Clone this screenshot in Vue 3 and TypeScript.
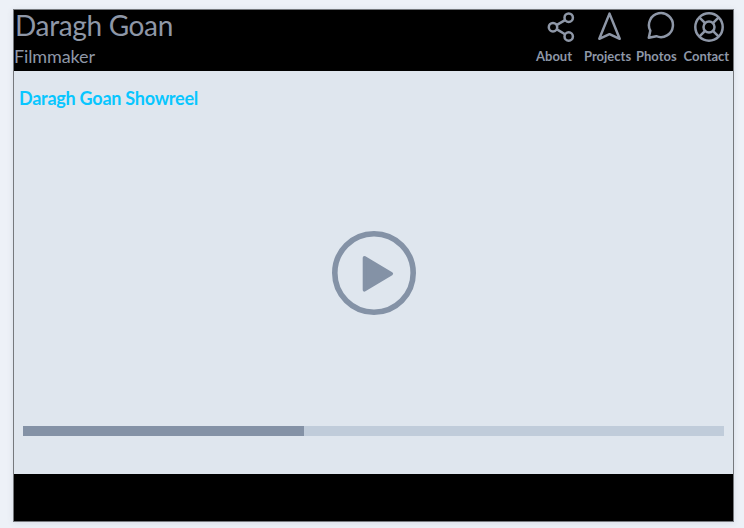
<script setup lang="ts">
const title: string = 'Daragh Goan'
const role: string = 'Filmmaker'
const progress: number = 40
</script>

<template>
  <div class="page">
    <main class="frame">
      <header class="header">
        <div class="brand">
          <h1>{{ title }}</h1>
          <p>{{ role }}</p>
        </div>
        <nav class="nav">
          <a class="item about">
            <svg viewBox="0 0 32 32">
              <path d="M11.5 14.2 20 9.2M11.5 18.1 20 23.3" />
              <circle cx="8" cy="16.2" r="4.2" />
              <circle cx="23.7" cy="6.7" r="4.2" />
              <circle cx="23.7" cy="25.5" r="4.2" />
            </svg>
            <span>About</span>
          </a>
          <a class="item projects">
            <svg viewBox="0 0 32 32"><path d="M15.5 2.6 25.7 27.8 15.5 23.2 5.3 27.8Z" /></svg>
            <span>Projects</span>
          </a>
          <a class="item photos">
            <svg viewBox="0 0 32 32">
              <path d="M3.8 26.8 5.3 19.7A12 12 0 1 1 11.3 25.2Z" />
            </svg>
            <span>Photos</span>
          </a>
          <a class="item contact">
            <svg viewBox="0 0 32 32">
              <circle cx="16" cy="16" r="13.7" />
              <circle cx="16" cy="16" r="5.5" />
              <path d="m6.3 6.3 5.8 5.8m7.8 7.8 5.8 5.8m0-19.4-5.8 5.8m-7.8 7.8-5.8 5.8" />
            </svg>
            <span>Contact</span>
          </a>
        </nav>
      </header>
      <section class="video">
        <h2>Daragh Goan Showreel</h2>
        <svg class="play" viewBox="0 0 84 84">
          <circle cx="42" cy="42" r="39.2" />
          <path d="M32.5 26.8 59.3 42.7 32.5 58.8Z" />
        </svg>
        <div class="track"><div class="fill" :style="{ width: progress + '%' }"></div></div>
      </section>
      <footer class="footer"></footer>
    </main>
  </div>
</template>

<style>
body { margin: 0; background: #edf1f7; }
</style>

<style scoped>
.page {
  box-sizing: border-box;
  height: 528px;
  padding: 9px 10px 6px 13px;
  overflow: hidden;
  font-family: Lato, sans-serif;
  background: #edf1f7;
}
.frame {
  box-sizing: border-box;
  display: flex;
  flex-direction: column;
  width: 721px;
  height: 513px;
  border: 1px solid #76797d;
  box-shadow: 0 1px 6px rgba(70, 85, 115, 0.12);
}
.header {
  display: flex;
  justify-content: space-between;
  height: 61px;
  background: #000;
  color: #8e97a7;
}
h1, h2, p { margin: 0; }
h1 {
  padding-left: 1px;
  font-size: 28px;
  line-height: 31px;
  font-weight: 400;
  letter-spacing: -0.35px;
}
.brand p {
  padding-top: 3px;
  font-size: 18px;
  line-height: 25px;
  letter-spacing: -0.12px;
}
.nav { display: flex; padding-top: 1px; }
.item {
  display: flex;
  flex-direction: column;
  font-size: 13px;
  font-weight: 700;
  line-height: 18px;
  white-space: nowrap;
}
.item svg {
  width: 32px;
  height: 32px;
  margin-bottom: 4px;
  fill: none;
  stroke: #8e97a7;
  stroke-width: 2.5;
  stroke-linejoin: round;
}
.about { width: 48px; }
.about svg { margin-left: 9px; }
.projects { width: 52px; }
.projects svg { margin-left: 10px; }
.photos { width: 47.5px; }
.photos svg { margin-left: 9px; }
.contact { width: 49.5px; }
.contact svg { margin-left: 9.5px; }
.video {
  display: flex;
  flex-direction: column;
  height: 403px;
  background: #dfe6ee;
}
h2 {
  padding: 15px 0 0 5px;
  color: #08c6ff;
  font-size: 18px;
  line-height: 25px;
  font-weight: 700;
  letter-spacing: -0.25px;
}
.play {
  align-self: center;
  width: 84px;
  height: 84px;
  margin-top: 120px;
  margin-left: 1px;
}
.play circle {
  fill: none;
  stroke: #8492a6;
  stroke-width: 5.6;
}
.play path {
  fill: #8492a6;
  stroke: #8492a6;
  stroke-width: 3.6;
  stroke-linejoin: round;
}
.track {
  height: 9.6px;
  margin: 111px 8.6px 0 9.4px;
  background: #c0ccda;
}
.fill { width: 0; height: 100%; background: #8492a6; }
.footer { flex: 1; background: #000; }
</style>
